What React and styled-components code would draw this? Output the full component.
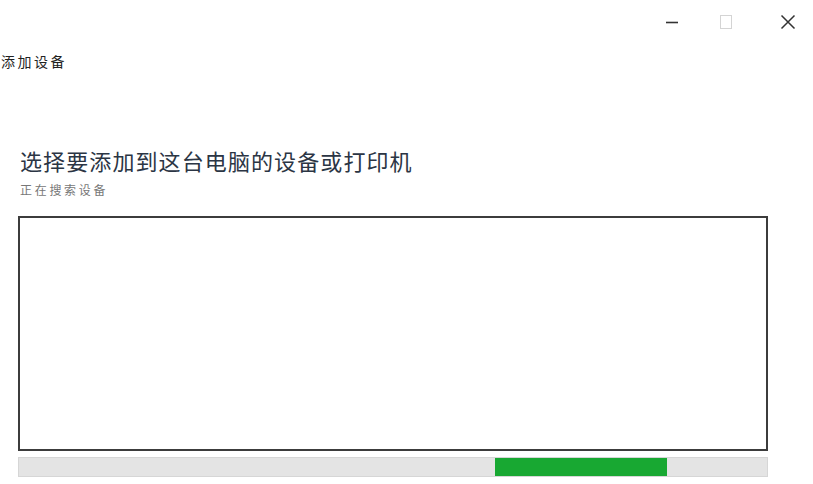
import React from 'react';
import styled, { createGlobalStyle } from 'styled-components';

const GlobalStyle = createGlobalStyle`
  html, body {
    margin: 0;
    padding: 0;
    background: #fff;
  }
  body {
    font-family: "Noto Sans CJK SC", "Noto Sans", sans-serif;
  }
`;

const Window = styled.div`
  width: 813px;
  height: 484px;
  background: #fff;
  display: flex;
  flex-direction: column;
  overflow: hidden;
`;

const TitleBar = styled.div`
  height: 44px;
  display: flex;
  justify-content: flex-end;
  align-items: center;
  gap: 24px;
  padding-right: 2px;
`;

const ControlButton = styled.div`
  width: ${p => (p.wide ? '46px' : '30px')};
  height: 44px;
  display: flex;
  align-items: center;
  justify-content: center;
  color: ${p => (p.dim ? '#d4d4d4' : '#333')};
`;

const WindowTitle = styled.div`
  margin-top: 8px;
  padding-left: 1px;
  font-size: 14px;
  line-height: 19px;
  letter-spacing: 2.5px;
  color: #222;
`;

const Content = styled.div`
  display: flex;
  flex-direction: column;
  padding: 0 45px 0 18px;
  margin-top: 76px;
`;

const Heading = styled.h1`
  margin: 0 0 0 2px;
  font-size: 22px;
  font-weight: 400;
  line-height: 26px;
  letter-spacing: 1.1px;
  color: #2b3544;
`;

const Status = styled.div`
  margin: 9px 0 0 2px;
  font-size: 12px;
  line-height: 16px;
  letter-spacing: 2.7px;
  color: #777;
`;

const DeviceList = styled.div`
  margin-top: 18px;
  height: 231px;
  border: 2px solid #3c3c3c;
  background: #fff;
`;

const Progress = styled.div`
  margin-top: 6px;
  height: 20px;
  background: #e4e4e4;
  border: 1px solid #d6d6d6;
  box-sizing: border-box;
  display: flex;
  align-items: center;
  padding-left: ${p => p.offset}px;
`;

const ProgressChunk = styled.div`
  width: ${p => p.size}px;
  height: 18px;
  background: #18a832;
`;

const App = () => (
  <Window>
    <GlobalStyle />
    <TitleBar>
      <ControlButton>
        <svg width="14" height="14" viewBox="0 0 14 14">
          <line x1="1" y1="7.5" x2="13" y2="7.5" stroke="currentColor" strokeWidth="1.6" />
        </svg>
      </ControlButton>
      <ControlButton dim>
        <svg width="14" height="14" viewBox="0 0 14 14">
          <rect x="1.5" y="0.5" width="11" height="13" fill="none" stroke="currentColor" strokeWidth="1" />
        </svg>
      </ControlButton>
      <ControlButton wide>
        <svg width="16" height="16" viewBox="0 0 16 16">
          <path d="M1.5 1.5 L14.5 14.5 M14.5 1.5 L1.5 14.5" stroke="currentColor" strokeWidth="1.5" />
        </svg>
      </ControlButton>
    </TitleBar>
    <WindowTitle>添加设备</WindowTitle>
    <Content>
      <Heading>选择要添加到这台电脑的设备或打印机</Heading>
      <Status>正在搜索设备</Status>
      <DeviceList />
      <Progress offset={476}>
        <ProgressChunk size={172} />
      </Progress>
    </Content>
  </Window>
);

export default App;
